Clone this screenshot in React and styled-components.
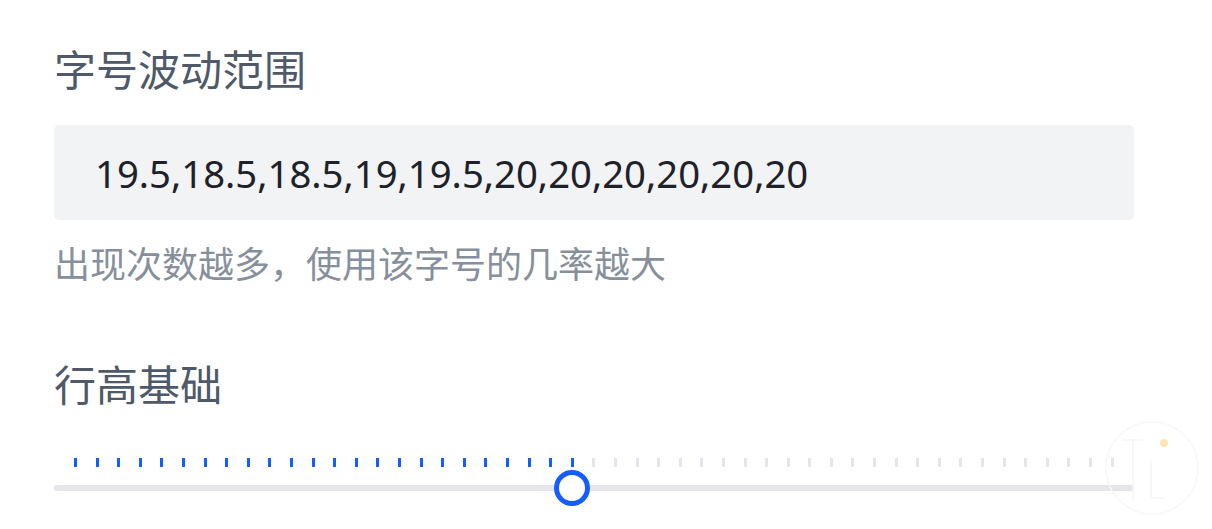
import React from "react";
import styled, { createGlobalStyle } from "styled-components";

const GlobalStyle = createGlobalStyle`
  html, body {
    margin: 0;
    padding: 0;
    background: #ffffff;
  }
  body {
    font-family: "Noto Sans", "Noto Sans CJK SC", sans-serif;
  }
`;

const Page = styled.div`
  position: relative;
  width: 1212px;
  height: 529px;
  overflow: hidden;
  padding: 38px 78px 0 54px;
  box-sizing: border-box;
`;

const Label = styled.div`
  font-family: "Noto Sans CJK SC", sans-serif;
  font-size: 42px;
  line-height: 59px;
  color: #4e5969;
  margin-top: ${(p) => p.$top || 0}px;
`;

const ValueBox = styled.div`
  margin-top: 28px;
  height: 95px;
  background: #f2f3f5;
  border-radius: 5px;
  display: flex;
  align-items: center;
  padding-left: 41px;
  box-sizing: border-box;
  font-family: "Noto Sans", "Noto Sans CJK SC", sans-serif;
  font-size: 38.3px;
  color: #1d2129;
`;

const Hint = styled.div`
  margin-top: 17px;
  font-family: "Noto Sans CJK SC", sans-serif;
  font-size: 36px;
  line-height: 50px;
  color: #86909c;
`;

const Slider = styled.div`
  position: relative;
  margin-top: 46px;
  width: 1080px;
`;

const Ticks = styled.div`
  display: flex;
  justify-content: space-between;
  padding: 0 calc(2% - 1.5px);
  height: 9px;
`;

const Tick = styled.span`
  width: 3px;
  height: 9px;
  background: ${(p) => (p.$on ? "#165dff" : "#e5e6eb")};
`;

const Track = styled.div`
  position: relative;
  margin-top: 18px;
  height: 6px;
  border-radius: 3px;
  background: #e5e6eb;
`;

const Thumb = styled.div`
  position: absolute;
  top: -15px;
  width: 36px;
  height: 36px;
  margin-left: -18px;
  border-radius: 50%;
  border: 5px solid #165dff;
  background: #ffffff;
  box-sizing: border-box;
`;

const Mark = styled.svg`
  position: absolute;
  left: 1103px;
  top: 420px;
`;

const TOTAL = 50;
const VALUE = 24;

export default function App() {
  const ticks = [];
  for (let i = 1; i < TOTAL; i++) {
    ticks.push(<Tick key={i} $on={i <= VALUE} />);
  }

  return (
    <>
      <GlobalStyle />
      <Page>
        <Label>字号波动范围</Label>
        <ValueBox>19.5,18.5,18.5,19,19.5,20,20,20,20,20,20</ValueBox>
        <Hint>出现次数越多，使用该字号的几率越大</Hint>
        <Label $top={66}>行高基础</Label>
        <Slider>
          <Ticks>{ticks}</Ticks>
          <Track>
            <Thumb style={{ left: `${(VALUE / TOTAL) * 100}%` }} />
          </Track>
        </Slider>
        {/* faint watermark in the corner */}
        <Mark width="100" height="100" viewBox="0 0 100 100">
          <circle cx="49" cy="48" r="46" fill="none" stroke="#f7f7f8" strokeWidth="1.5" />
          <path d="M20 20 L40 20 M30 20 L30 80 M48 40 L48 78 L62 78" fill="none" stroke="#f6f6f7" strokeWidth="1.5" />
          <circle cx="61" cy="23" r="4" fill="#fbe7b5" />
        </Mark>
      </Page>
    </>
  );
}
